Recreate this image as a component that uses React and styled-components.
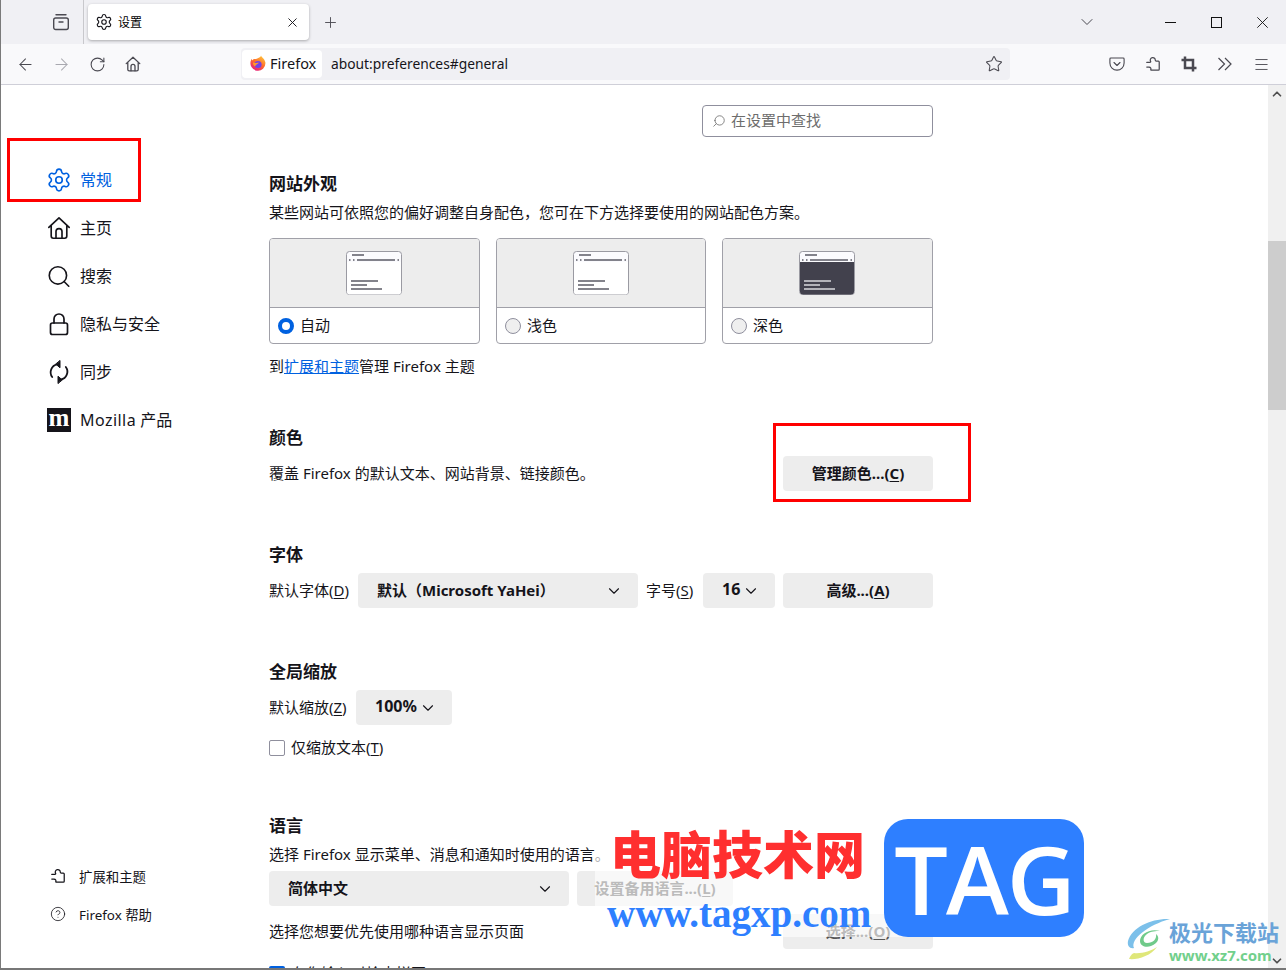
import React from 'react'
import styled, { createGlobalStyle } from 'styled-components'
import { ArrowLeft, ArrowRight, ChevronDown, ChevronUp, CircleHelp, Menu, Plus, RotateCw, Search, Settings, Star, X } from 'lucide-react'

const FONT = `"Noto Sans", "Noto Sans CJK SC", sans-serif`

const Global = createGlobalStyle`
  html, body { margin: 0; padding: 0; background: #fff; }
  body { font-family: ${FONT}; color: #15141a; overflow: hidden; }
  * { box-sizing: border-box; }
  u { text-underline-offset: 2px; }
`

const Win = styled.div`
  position: relative;
  width: 1286px;
  height: 970px;
  display: flex;
  flex-direction: column;
  overflow: hidden;
  border-left: 1px solid #7a7a7a;
  border-bottom: 2px solid #777;
`
const TabBar = styled.div`
  height: 44px;
  flex: none;
  background: #f0f0f4;
  display: flex;
  align-items: center;
  padding-left: 42px;
`
const IconBtn = styled.div`
  flex: none;
  width: ${p => p.$w || 36}px;
  height: 36px;
  display: flex;
  align-items: center;
  justify-content: center;
  color: ${p => p.$color || '#4a4951'};
`
const Sep = styled.div`
  width: 1px;
  height: 44px;
  background: #c8c8cc;
  margin: 0 4px;
`
const Tab = styled.div`
  width: 221px;
  height: 36px;
  background: #fff;
  border-radius: 4px;
  box-shadow: 0 1px 3px rgba(0,0,0,.3);
  display: flex;
  align-items: center;
  padding: 0 9px 0 7px;
  gap: 5px;
  font-size: 12px;
  color: #000;
`
const TabTitle = styled.span`
  flex: 1;
`
const Spacer = styled.div`
  flex: 1;
`
const NewTab = styled(IconBtn)`
  margin-left: 3px;
`
const WinBtn = styled.div`
  width: 46px;
  flex: none;
  display: flex;
  align-items: center;
  justify-content: center;
  color: #111;
`
const WinBtns = styled.div`
  display: flex;
  margin-left: 42px;
  margin-right: 1px;
`
const ToolBar = styled.div`
  height: 41px;
  flex: none;
  background: #f9f9fb;
  border-bottom: 1px solid #cfcfd8;
  display: flex;
  align-items: center;
  padding-left: 6px;
`
const UrlBar = styled.div`
  width: 769px;
  height: 32px;
  margin: 0 89px 0 90px;
  flex: none;
  background: #f0f0f4;
  border-radius: 4px;
  display: flex;
  align-items: center;
  padding-left: 1px;
  font-size: 14.5px;
`
const Chip = styled.div`
  width: 80px;
  height: 28px;
  background: #fff;
  border-radius: 4px;
  display: flex;
  align-items: center;
  padding: 0 0 2px 8px;
  gap: 4px;
  margin-right: 9px;
`
const UrlText = styled.span`
  flex: 1;
  font-size: 13.8px;
  padding-bottom: 2px;
`
const StarBox = styled.div`
  width: 32px;
  display: flex;
  justify-content: center;
  color: #4a4951;
`
const Body = styled.div`
  flex: 1;
  min-height: 0;
  display: flex;
`
const Side = styled.nav`
  width: 268px;
  flex: none;
  padding: 71px 0 35px 45px;
  display: flex;
  flex-direction: column;
  justify-content: space-between;
`
const NavList = styled.div`
  display: flex;
  flex-direction: column;
`
const NavItem = styled.div`
  height: 48px;
  display: flex;
  align-items: center;
  gap: 8px;
  font-size: 16px;
  color: ${p => (p.$active ? '#0061e0' : '#15141a')};
`
const NavIcon = styled.span`
  width: 26px;
  height: 26px;
  display: flex;
  align-items: center;
  justify-content: center;
  flex: none;
`
const NavLabel = styled.span`
  padding-bottom: 2px;
`
const Wide = styled.span`
  letter-spacing: .45px;
`
const MozLogo = styled.span`
  width: 24px;
  height: 24px;
  margin: 0 1px;
  background: #15141a;
  color: #fff;
  display: flex;
  align-items: center;
  justify-content: center;
  font: bold 25px/20px "Liberation Serif", serif;
  padding-bottom: 4px;
  flex: none;
`
const FootItem = styled.div`
  height: 38px;
  display: flex;
  align-items: center;
  gap: 13px;
  padding-left: 4px;
  font-size: 13.4px;
`
const FootIcon = styled.span`
  width: 16px;
  display: flex;
  justify-content: center;
  flex: none;
`
const Main = styled.main`
  width: 664px;
  flex: none;
  padding-top: 20px;
`
const SearchRow = styled.div`
  display: flex;
  justify-content: flex-end;
  margin-bottom: 35px;
`
const SearchBox = styled.div`
  width: 231px;
  height: 32px;
  border: 1px solid #8f8f9d;
  border-radius: 4px;
  display: flex;
  align-items: center;
  gap: 5px;
  padding: 0 0 3px 9px;
  font-size: 15px;
  color: #6d6d6d;
`
const MirrorSearch = styled(Search)`
  transform: scaleX(-1);
  margin-top: 3px;
`
const Heading = styled.h2`
  margin: ${p => p.$top || 0}px 0 0;
  font-size: 17px;
  line-height: 24px;
  font-weight: 700;
`
const Text = styled.div`
  flex: none;
  width: ${p => (p.$w ? `${p.$w}px` : 'auto')};
  margin-top: ${p => p.$top || 0}px;
  font-size: 15px;
  height: 22px;
  line-height: 20px;
  white-space: nowrap;
  color: #15141a;
`
const Cards = styled.div`
  display: grid;
  grid-template-columns: 211px 210px 211px;
  gap: 16px;
  margin: 14px 0 12px;
`
const Card = styled.div`
  height: 106px;
  border: 1px solid #a0a0a8;
  border-radius: 4px;
  overflow: hidden;
`
const CardTop = styled.div`
  height: 69px;
  background: #ededed;
  border-bottom: 1px solid #a0a0a8;
  display: flex;
  align-items: center;
  justify-content: center;
  padding-right: 1px;
`
const CardLabel = styled.div`
  height: 36px;
  display: flex;
  align-items: center;
  gap: 6px;
  padding-left: 8px;
  font-size: 15px;
`
const CardText = styled.span`
  padding-bottom: 3px;
`
const Radio = styled.span`
  width: 16px;
  height: 16px;
  border-radius: 50%;
  flex: none;
  background: ${p => (p.$on ? '#fff' : '#efefef')};
  border: ${p => (p.$on ? '4px solid #0061e0' : '1px solid #8f8f9d')};
`
const Link = styled.span`
  color: #0061e0;
  text-decoration: underline;
`
const Row = styled.div`
  display: flex;
  align-items: ${p => p.$align || 'center'};
  gap: ${p => (p.$gap === undefined ? 8 : p.$gap)}px;
  margin-top: ${p => p.$top || 0}px;
`
const Between = styled(Row)`
  justify-content: space-between;
`
const Btn = styled.div`
  flex: none;
  width: ${p => p.$w}px;
  height: 35px;
  background: #ededed;
  border-radius: 4px;
  display: flex;
  align-items: center;
  justify-content: ${p => (p.$select ? 'space-between' : 'center')};
  padding: ${p => (p.$select ? `0 15px 0 ${p.$pl || 19}px` : 0)};
  font-size: ${p => p.$size || 15}px;
  font-weight: 700;
  color: ${p => (p.$off ? '#555' : '#15141a')};
  white-space: nowrap;
`
const BtnText = styled.span`
  padding-bottom: 3px;
`
const Check = styled.span`
  width: 16px;
  height: 16px;
  flex: none;
  border-radius: 2px;
  background: ${p => (p.$on ? '#0061e0' : '#fff')};
  border: ${p => (p.$on ? 'none' : '1px solid #8f8f9d')};
`
const ScrollBar = styled.div`
  margin-left: auto;
  width: 18px;
  flex: none;
  background: #f0f0f0;
  position: relative;
  display: flex;
  flex-direction: column;
  justify-content: space-between;
  align-items: center;
  color: #505050;
  padding: 2px 0 0;
`
const Thumb = styled.div`
  position: absolute;
  left: 0;
  right: 0;
  top: 156px;
  height: 169px;
  background: #cdcdcd;
`
const Mark = styled.div`
  position: absolute;
  left: ${p => p.$x}px;
  top: ${p => p.$y}px;
  width: ${p => p.$w}px;
  height: ${p => p.$h}px;
  border: 3px solid #f00;
`
const Water = styled.div`
  position: absolute;
  left: 594px;
  top: 819px;
  width: 500px;
  height: 118px;
  background: rgba(255,255,255,.6);
`
const WaterRed = styled.div`
  position: absolute;
  left: 15px;
  top: -2px;
  font: 900 51px/70px "Noto Sans CJK SC", sans-serif;
  color: #ff2f2f;
  white-space: nowrap;
`
const WaterUrl = styled.div`
  position: absolute;
  left: 12px;
  top: 72px;
  font: 700 39px/46px "Liberation Serif", serif;
  color: #2e7fff;
  white-space: nowrap;
`
const TagBox = styled.div`
  position: absolute;
  left: 883px;
  top: 819px;
  width: 200px;
  height: 118px;
  background: #2e7fff;
  border-radius: 24px;
  display: flex;
  align-items: center;
  justify-content: center;
  color: #fff;
  font: 600 95px/118px "Open Sans", sans-serif;
  letter-spacing: -2px;
`
const XzLogo = styled.div`
  position: absolute;
  left: 1125px;
  top: 917px;
  display: flex;
  width: 156px;
`
const XzText = styled.div`
  display: flex;
  flex-direction: column;
  margin-left: -3px;
`
const XzName = styled.div`
  font: 700 22px/28px "Noto Sans CJK SC", sans-serif;
  color: #6aa3d8;
  white-space: nowrap;
`
const XzUrl = styled.div`
  font: 700 15px/20px "Noto Sans", sans-serif;
  color: #72d08c;
  white-space: nowrap;
`

const stroke = { fill: 'none', stroke: 'currentColor', strokeWidth: 1.4, strokeLinecap: 'round', strokeLinejoin: 'round' }

const ViewIcon = () => (
  <svg width="18" height="18" viewBox="0 0 18 18" {...stroke}>
    <rect x="1.7" y="5" width="14.6" height="11.5" rx="2" />
    <path d="M4 1.8h10M7 9h4" />
  </svg>
)
const HomeIcon = ({ s = 16 }) => (
  <svg width={s} height={s} viewBox="0 0 16 16" {...stroke} strokeWidth={s > 16 ? 1.1 : 1.3}>
    <path d="M1.2 7.6 8 1.2l6.8 6.4M2.8 6.4v7a1.4 1.4 0 0 0 1.4 1.4h7.6a1.4 1.4 0 0 0 1.4-1.4v-7" />
    <path d="M6 14.8V10.4a2 2 0 0 1 4 0v4.4" />
  </svg>
)
const LockIcon = () => (
  <svg width="24" height="24" viewBox="0 0 24 24" {...stroke} strokeWidth={1.7}>
    <rect x="3.5" y="11" width="17" height="11.5" rx="2" />
    <path d="M7 11V7a5 5 0 0 1 10 0v4" />
  </svg>
)
const SyncIcon = () => (
  <svg width="22" height="24" viewBox="0 0 22 24" {...stroke} strokeWidth={1.8}>
    <path d="M4.2 17a8 8 0 0 1 5-12.6M17.8 7a8 8 0 0 1-5 12.6" />
    <path d="M12 .8v7L8 4.3zM10 23.2v-7l4 3.5z" fill="currentColor" strokeWidth={1} />
  </svg>
)
const PuzzleIcon = ({ s = 18 }) => (
  <svg width={s} height={s} viewBox="0 0 18 18" {...stroke}>
    <path d="M2 7.2h3.400c1 0 1.300-.7.800-1.500-.9-1.400.2-3.700 2.200-3.900 2-.2 3.200 1.100 3.100 2.600 0 .8.500 1.300 1.300 1.300H15c.6 0 1 .4 1 1v8.100c0 .6-.4 1-1 1H7l-.6-.1c.8-1.500-.1-3.200-1.900-3.300H2" />
  </svg>
)
const PocketIcon = () => (
  <svg width="16" height="16" viewBox="0 0 16 16" {...stroke} strokeWidth={1.1}>
    <path d="M1.800 2h12.400c.5 0 .9.400.9.900V7a7.100 7.100 0 0 1-14.200 0V2.900c0-.5.400-.9.900-.9z" />
    <path d="m5 6.500 3 3 3-3" />
  </svg>
)
const CropIcon = () => (
  <svg width="16" height="16" viewBox="0 0 16 16" fill="none" stroke="currentColor" strokeWidth="2.500">
    <path d="M4 .5V12h11.500M.5 4H12v11.500" />
  </svg>
)
const DoubleChevron = () => (
  <svg width="16" height="16" viewBox="0 0 16 16" fill="none" stroke="currentColor" strokeWidth="1.200">
    <path d="M1.500 2 7.500 8l-6 6M8 2l6 6-6 6" />
  </svg>
)
const FoxIcon = () => (
  <svg width="16" height="16" viewBox="0 0 16 16">
    <defs>
      <linearGradient id="fx" x1="0.8" y1="0" x2="0.2" y2="1">
        <stop offset="0" stopColor="#ffc93a" />
        <stop offset=".5" stopColor="#ff6a2b" />
        <stop offset="1" stopColor="#e31587" />
      </linearGradient>
    </defs>
    <path d="M11 .5c.4 1.700 3.800 3.200 4.400 7.100A7.500 7.500 0 1 1 .9 5.600c.3-.9.700-1.500 1-1.900 0 .8.200 1.300.6 1.700C3 4 4.500 3.800 6 4.100 7.500 3 10.500 2.800 11 .5z" fill="url(#fx)" />
    <circle cx="8" cy="9.500" r="3.600" fill="#7542e5" />
    <path d="M3 7.500c2 .6 4 .4 6 .3-1 1.200-3 1.300-4 3.700-1.500-.8-2.200-2.400-2-4z" fill="#ff9a2a" />
  </svg>
)
const Preview = ({ dark }) => {
  const line = dark ? '#d8d8dc' : '#5b5b66'
  const bg = dark ? '#42414d' : '#fff'
  return (
    <svg width="56" height="44" viewBox="0 0 56 44">
      <rect x=".5" y=".5" width="55" height="43" rx="3" fill="#fbfbfe" stroke="#9a9aa2" />
      <path d="M1 11h54v29.500a3 3 0 0 1-3 3H4a3 3 0 0 1-3-3z" fill={bg} />
      <path d="M6 4h12M3 9h1.500M7 9h1.500M11 9h38M51.500 9H53" stroke="#5b5b66" strokeWidth="1.700" />
      <path d="M5 30h27M5 34h16M5 38h31" stroke={line} strokeWidth="1.700" />
    </svg>
  )
}
const Swirl = () => (
  <svg width="46" height="44" viewBox="0 0 46 44" fill="none">
    <path d="M44 2C26 1 6 10 2 24c-1 5 2 8 6 7C4 22 22 8 44 2z" fill="#7cc0ea" />
    <path d="M34 14c-10-3-20 3-20 10 0 5 6 7 11 5 8-3 9-9 5-12 1 5-3 9-9 9-4 0-5-5 0-9 4-3 9-3 13-3z" fill="#70ca8a" />
    <path d="M3 42c8 1 22-3 28-12-6 4-16 7-23 6-3 1-4 4-5 6z" fill="#dfe77a" />
  </svg>
)
const Chevron = () => <ChevronDown size={18} strokeWidth={1.5} />

const App = () => {
  return (
    <>
      <Global />
      <Win>
        <TabBar>
          <IconBtn><ViewIcon /></IconBtn>
          <Sep />
          <Tab>
            <Settings size={18} strokeWidth={1.5} color="#15141a" />
            <TabTitle>设置</TabTitle>
            <X size={15} strokeWidth={1.5} color="#15141a" />
          </Tab>
          <NewTab><Plus size={17} strokeWidth={1.3} /></NewTab>
          <Spacer />
          <IconBtn><ChevronDown size={20} strokeWidth={1.2} /></IconBtn>
          <WinBtns>
            <WinBtn>
              <svg width="11" height="11" viewBox="0 0 11 11"><path d="M0 5.500h11" stroke="currentColor" /></svg>
            </WinBtn>
            <WinBtn>
              <svg width="11" height="11" viewBox="0 0 11 11"><rect x=".5" y=".5" width="10" height="10" fill="none" stroke="currentColor" /></svg>
            </WinBtn>
            <WinBtn>
              <svg width="11" height="11" viewBox="0 0 11 11"><path d="M.3.300l10.400 10.400M10.700.300.3 10.700" stroke="currentColor" strokeWidth=".9" /></svg>
            </WinBtn>
          </WinBtns>
        </TabBar>
        <ToolBar>
          <IconBtn><ArrowLeft size={19} strokeWidth={1.3} /></IconBtn>
          <IconBtn $color="#a9a9b0"><ArrowRight size={19} strokeWidth={1.3} /></IconBtn>
          <IconBtn><RotateCw size={17} strokeWidth={1.5} /></IconBtn>
          <IconBtn><HomeIcon /></IconBtn>
          <UrlBar>
            <Chip><FoxIcon />Firefox</Chip>
            <UrlText>about:preferences#general</UrlText>
            <StarBox><Star size={18} strokeWidth={1.4} /></StarBox>
          </UrlBar>
          <IconBtn><PocketIcon /></IconBtn>
          <IconBtn><PuzzleIcon s={16} /></IconBtn>
          <IconBtn><CropIcon /></IconBtn>
          <IconBtn><DoubleChevron /></IconBtn>
          <IconBtn><Menu size={17} strokeWidth={1.3} /></IconBtn>
        </ToolBar>
        <Body>
          <Side>
            <NavList>
              <NavItem $active><NavIcon><Settings size={26} strokeWidth={1.5} /></NavIcon><NavLabel>常规</NavLabel></NavItem>
              <NavItem><NavIcon><HomeIcon s={24} /></NavIcon><NavLabel>主页</NavLabel></NavItem>
              <NavItem><NavIcon><Search size={27} strokeWidth={1.5} /></NavIcon><NavLabel>搜索</NavLabel></NavItem>
              <NavItem><NavIcon><LockIcon /></NavIcon><NavLabel>隐私与安全</NavLabel></NavItem>
              <NavItem><NavIcon><SyncIcon /></NavIcon><NavLabel>同步</NavLabel></NavItem>
              <NavItem><MozLogo>m</MozLogo><NavLabel><Wide>Mozilla</Wide> 产品</NavLabel></NavItem>
            </NavList>
            <div>
              <FootItem><FootIcon><PuzzleIcon s={16} /></FootIcon>扩展和主题</FootItem>
              <FootItem><FootIcon><CircleHelp size={18} strokeWidth={1.2} /></FootIcon>Firefox 帮助</FootItem>
            </div>
          </Side>
          <Main>
            <SearchRow>
              <SearchBox>
                <MirrorSearch size={14} strokeWidth={1.4} />
                在设置中查找
              </SearchBox>
            </SearchRow>
            <Heading>网站外观</Heading>
            <Text $top={6}>某些网站可依照您的偏好调整自身配色，您可在下方选择要使用的网站配色方案。</Text>
            <Cards>
              <Card><CardTop><Preview /></CardTop><CardLabel><Radio $on /><CardText>自动</CardText></CardLabel></Card>
              <Card><CardTop><Preview /></CardTop><CardLabel><Radio /><CardText>浅色</CardText></CardLabel></Card>
              <Card><CardTop><Preview dark /></CardTop><CardLabel><Radio /><CardText>深色</CardText></CardLabel></Card>
            </Cards>
            <Text>到<Link>扩展和主题</Link>管理 Firefox 主题</Text>
            <Heading $top={48}>颜色</Heading>
            <Between $top={6}>
              <Text>覆盖 Firefox 的默认文本、网站背景、链接颜色。</Text>
              <Btn $w={150}><BtnText>管理颜色...(<u>C</u>)</BtnText></Btn>
            </Between>
            <Heading $top={52}>字体</Heading>
            <Row $top={6}>
              <Text $w={81}>默认字体(<u>D</u>)</Text>
              <Btn $w={280} $select><BtnText>默认（Microsoft YaHei）</BtnText><Chevron /></Btn>
              <Text $w={49}>字号(<u>S</u>)</Text>
              <Btn $w={72} $select $pl={19} $size={16}><BtnText>16</BtnText><Chevron /></Btn>
              <Btn $w={150}><BtnText>高级...(<u>A</u>)</BtnText></Btn>
            </Row>
            <Heading $top={52}>全局缩放</Heading>
            <Row $top={6}>
              <Text $w={79}>默认缩放(<u>Z</u>)</Text>
              <Btn $w={96} $select $pl={19} $size={16}><BtnText>100%</BtnText><Chevron /></Btn>
            </Row>
            <Row $top={12} $gap={6}>
              <Check />
              <Text>仅缩放文本(<u>T</u>)</Text>
            </Row>
            <Heading $top={55}>语言</Heading>
            <Text $top={6}>选择 Firefox 显示菜单、消息和通知时使用的语言。</Text>
            <Row $top={5}>
              <Btn $w={300} $select><BtnText>简体中文</BtnText><Chevron /></Btn>
              <Btn $w={156} $off><BtnText>设置备用语言...(<u>L</u>)</BtnText></Btn>
            </Row>
            <Between $top={8} $align="flex-start">
              <Text $top={7}>选择您想要优先使用哪种语言显示页面</Text>
              <Btn $w={150} $off><BtnText>选择...(<u>O</u>)</BtnText></Btn>
            </Between>
            <Row $top={14} $gap={6}>
              <Check $on />
              <Text>在您输入时检查拼写</Text>
            </Row>
          </Main>
          <ScrollBar>
            <ChevronUp size={14} strokeWidth={3} />
            <Thumb />
            <ChevronDown size={14} strokeWidth={3} />
          </ScrollBar>
        </Body>
        <Mark $x={6} $y={138} $w={134} $h={64} />
        <Mark $x={772} $y={423} $w={198} $h={79} />
        <Water>
          <WaterRed>电脑技术网</WaterRed>
          <WaterUrl>www.tagxp.com</WaterUrl>
        </Water>
        <TagBox>TAG</TagBox>
        <XzLogo>
          <Swirl />
          <XzText>
            <XzName>极光下载站</XzName>
            <XzUrl>www.xz7.com</XzUrl>
          </XzText>
        </XzLogo>
      </Win>
    </>
  )
}

export default App
